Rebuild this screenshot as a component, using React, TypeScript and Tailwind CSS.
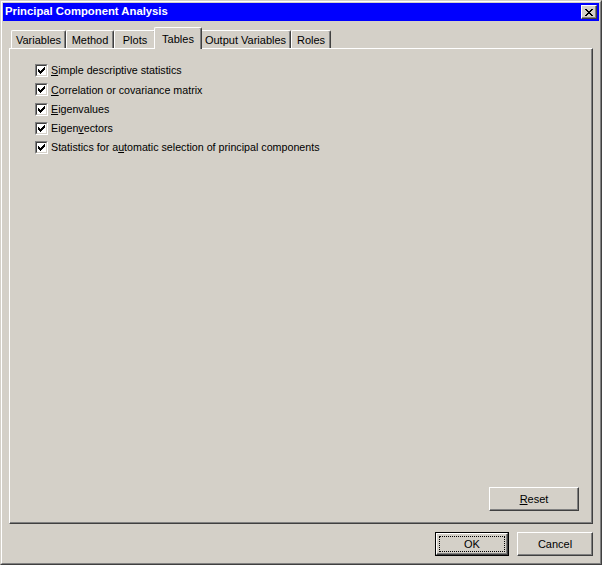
import React from 'react';

const font = { fontFamily: '"Liberation Sans", Arial, sans-serif' };

interface TabProps {
  label: string;
  width: string;
  selected?: boolean;
}

const Tab: React.FC<TabProps> = ({ label, width, selected }) => {
  if (selected) {
    return (
      <div
        className={`relative z-10 -mx-[2px] -mb-px h-[22px] ${width} flex items-start justify-center pt-[3px] bg-[#d4d0c8] border-l border-t border-white border-r border-r-[#404040] rounded-tl-[2px] rounded-tr-[2px] shadow-[inset_-1px_0_0_#808080] text-[11px] text-black`}
      >
        {label}
      </div>
    );
  }
  return (
    <div
      className={`h-[18px] ${width} flex items-center justify-center pt-[2px] bg-[#d4d0c8] border-l border-t border-white border-r border-r-[#404040] rounded-tl-[2px] rounded-tr-[2px] shadow-[inset_-1px_0_0_#808080] text-[11px] text-black`}
    >
      {label}
    </div>
  );
};

const CheckBox: React.FC = () => (
  <div className="w-[13px] h-[13px] border border-t-[#808080] border-l-[#808080] border-b-white border-r-white shrink-0">
    <div className="w-full h-full bg-white border border-t-[#404040] border-l-[#404040] border-b-[#d4d0c8] border-r-[#d4d0c8] flex items-center justify-center">
      <svg width="7" height="7" viewBox="0 0 7 7" shapeRendering="crispEdges">
        <path d="M0 2h1v3h-1zM1 3h1v3h-1zM2 4h1v3h-1zM3 3h1v3h-1zM4 2h1v3h-1zM5 1h1v3h-1zM6 0h1v3h-1z" fill="#000" />
      </svg>
    </div>
  </div>
);

const Row: React.FC<{ children: React.ReactNode }> = ({ children }) => (
  <div className="h-[19.25px] flex items-center gap-[3px]">
    <CheckBox />
    <span className="text-[10.7px] text-black leading-none">{children}</span>
  </div>
);

const Button: React.FC<{ children: React.ReactNode; width: string; isDefault?: boolean }> = ({ children, width, isDefault }) => {
  if (isDefault) {
    return (
      <div className={`${width} h-[24px] border border-black`}>
        <div className="w-full h-full border border-t-white border-l-white border-b-[#404040] border-r-[#404040] shadow-[inset_-1px_-1px_0_#808080] flex items-center justify-center p-[2px]">
          <div className="w-full h-full border border-dotted border-black flex items-center justify-center text-[11px] text-black">
            {children}
          </div>
        </div>
      </div>
    );
  }
  return (
    <div
      className={`${width} h-[24px] border border-t-white border-l-white border-b-[#404040] border-r-[#404040] shadow-[inset_-1px_-1px_0_#808080] flex items-center justify-center text-[11px] text-black`}
    >
      {children}
    </div>
  );
};

const App: React.FC = () => {
  return (
    <div style={font} className="w-[602px] h-[565px] bg-[#d4d0c8] border border-t-[#d4d0c8] border-l-[#d4d0c8] border-b-[#404040] border-r-[#404040]">
      <div className="w-full h-full border border-t-white border-l-white border-b-[#808080] border-r-[#808080] p-px flex flex-col">
        {/* title bar */}
        <div className="h-[18px] bg-[#0000ff] flex items-center justify-between pl-[2px] pr-[2px]">
          <span className="text-white font-bold text-[11.3px] leading-none">Principal Component Analysis</span>
          <div className="w-[16px] h-[14px] bg-[#d4d0c8] border border-t-white border-l-white border-b-[#404040] border-r-[#404040] shadow-[inset_-1px_-1px_0_#808080] flex items-center justify-center">
            <svg width="8" height="7" viewBox="0 0 8 7" shapeRendering="crispEdges">
              <path d="M0 0h2v1h-2zM6 0h2v1h-2zM1 1h2v1h-2zM5 1h2v1h-2zM2 2h4v1h-4zM3 3h2v1h-2zM2 4h4v1h-4zM1 5h2v1h-2zM5 5h2v1h-2zM0 6h2v1h-2zM6 6h2v1h-2z" fill="#000" />
            </svg>
          </div>
        </div>

        {/* body */}
        <div className="flex-1 flex flex-col px-[6px] pt-[7px]">
          <div className="h-[20px] flex items-end pl-[2px]">
            <Tab label="Variables" width="w-[55px]" />
            <Tab label="Method" width="w-[48px]" />
            <Tab label="Plots" width="w-[42px]" />
            <Tab label="Tables" width="w-[48px]" selected />
            <Tab label="Output Variables" width="w-[91px]" />
            <Tab label="Roles" width="w-[40px]" />
          </div>

          <div className="w-[584px] h-[476px] border border-t-white border-l-white border-b-[#404040] border-r-[#404040] shadow-[inset_-1px_-1px_0_#808080] flex flex-col">
            <div className="flex flex-col pl-[25px] pt-[12px]">
              <Row><span className="underline">S</span>imple descriptive statistics</Row>
              <Row><span className="underline">C</span>orrelation or covariance matrix</Row>
              <Row><span className="underline">E</span>igenvalues</Row>
              <Row>Eigen<span className="underline">v</span>ectors</Row>
              <Row>Statistics for a<span className="underline">u</span>tomatic selection of principal components</Row>
            </div>
            <div className="flex-1" />
            <div className="flex justify-end pr-[13px] pb-[12px]">
              <Button width="w-[90px]">
                <span><span className="underline">R</span>eset</span>
              </Button>
            </div>
          </div>

          <div className="flex justify-end gap-[8px] mt-[8px] w-[584px]">
            <Button width="w-[74px]" isDefault>OK</Button>
            <Button width="w-[76px]">Cancel</Button>
          </div>
        </div>
      </div>
    </div>
  );
};

export default App;
